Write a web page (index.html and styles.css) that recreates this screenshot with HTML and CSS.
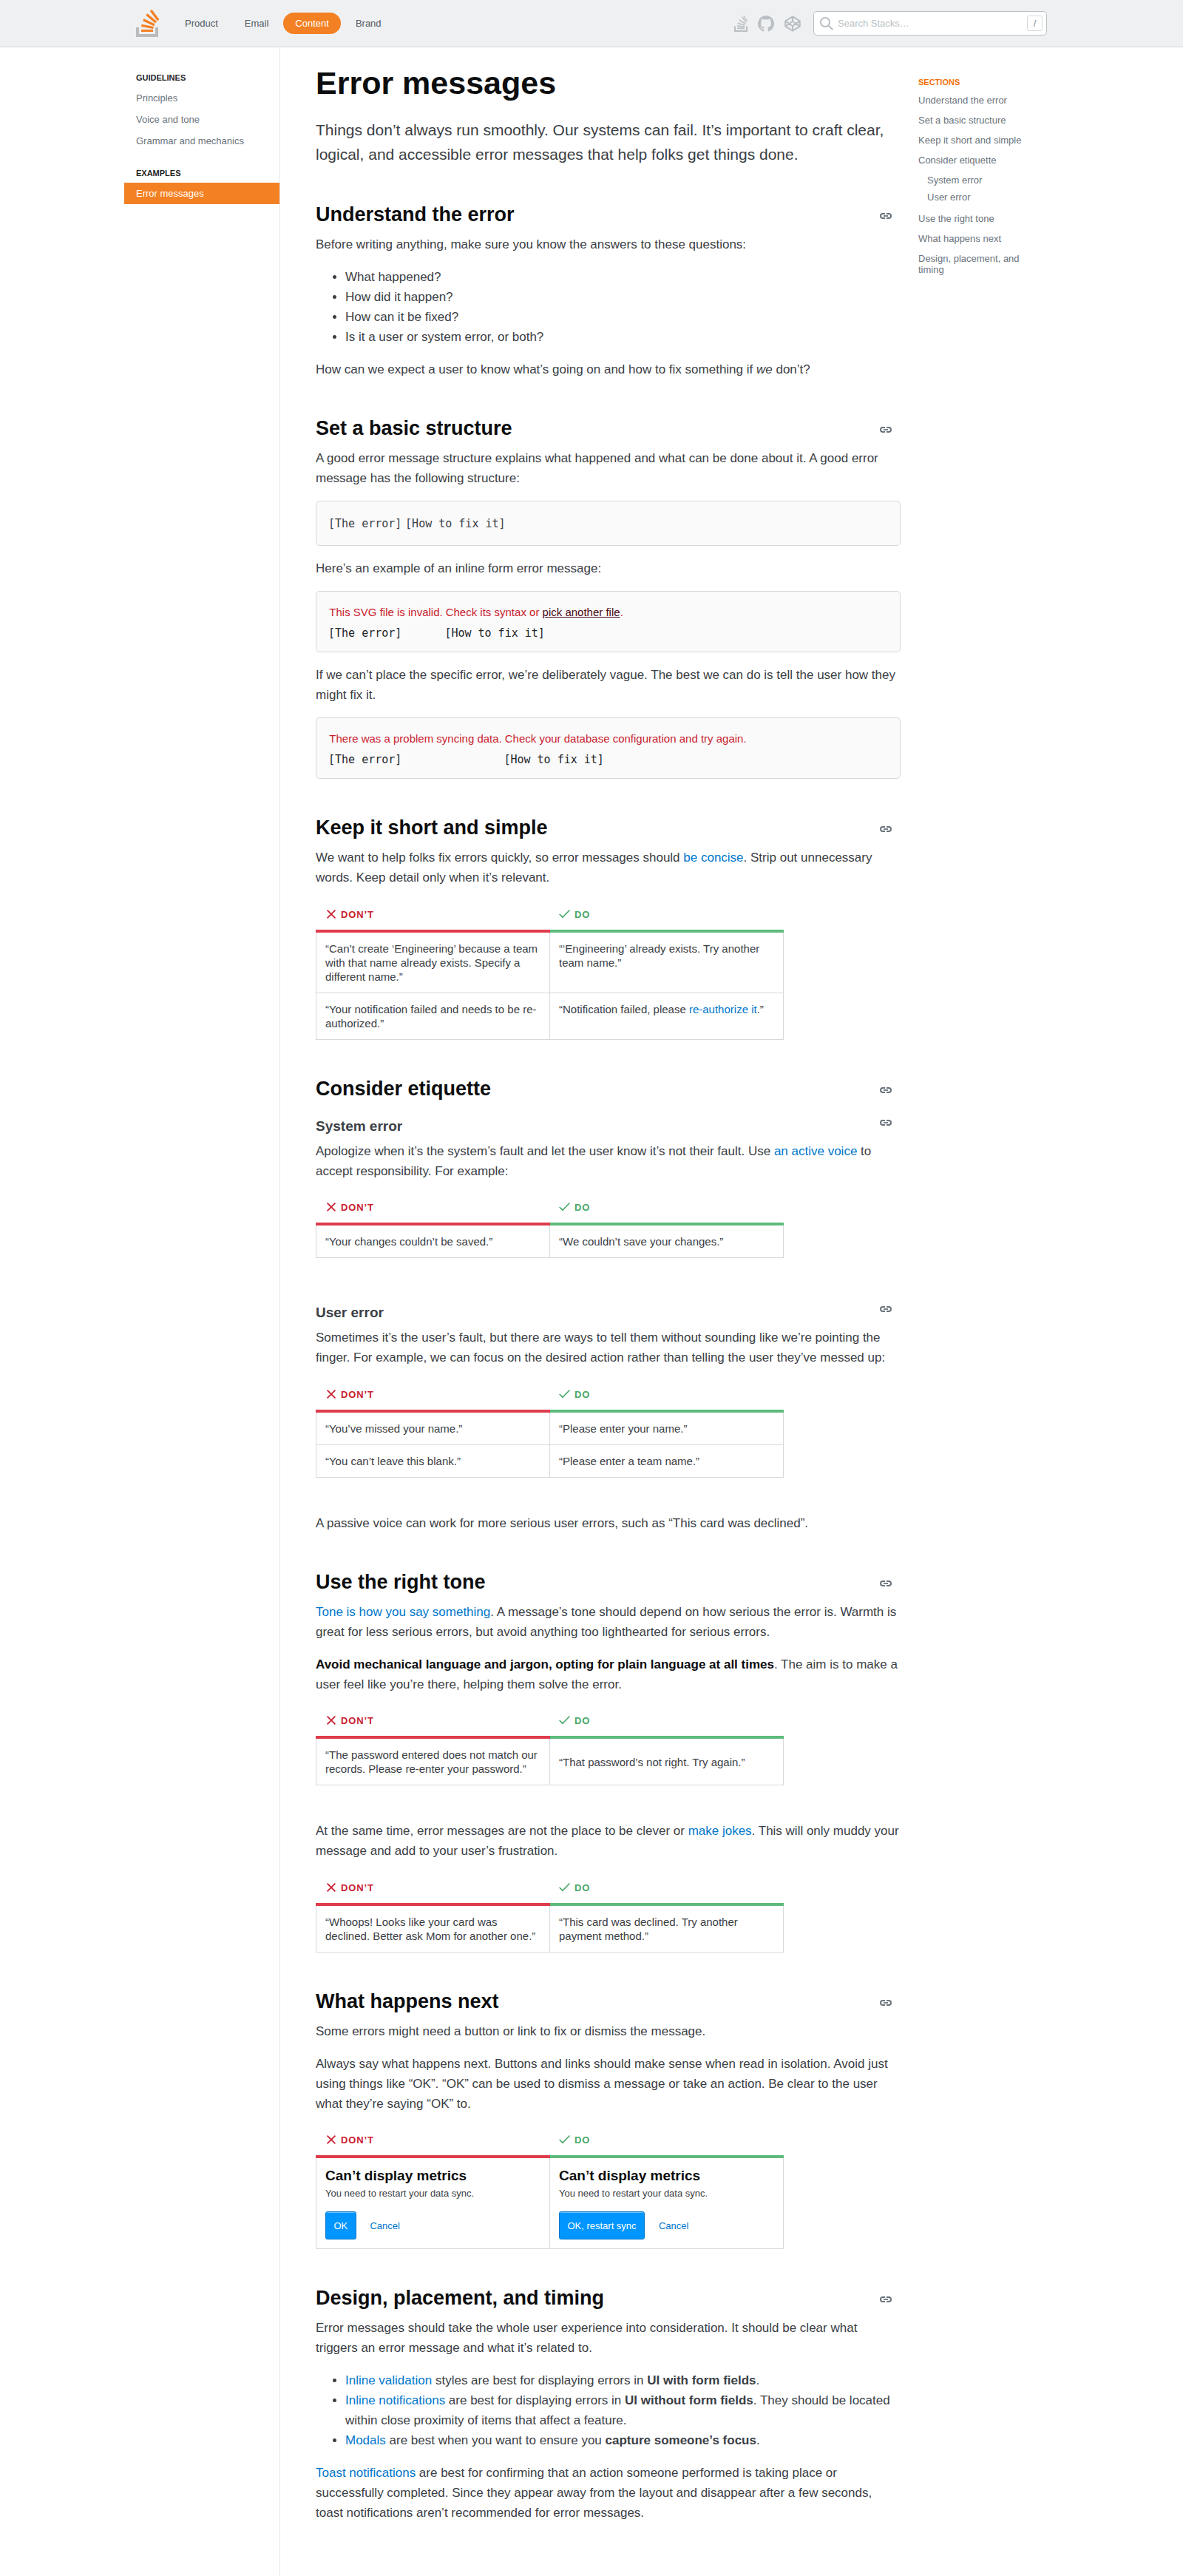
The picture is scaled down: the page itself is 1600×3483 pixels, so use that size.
FILE: index.html
```html
<!DOCTYPE html>
<html lang="en">
<head>
<meta charset="utf-8">
<title>Error messages - Stacks</title>
<link rel="stylesheet" href="styles.css">
</head>
<body>
<svg class="sprite" aria-hidden="true">
  <symbol id="link" viewBox="0 0 16 8"><path d="M7 1H4a3 3 0 0 0 0 6h3M9 1h3a3 3 0 0 1 0 6H9" fill="none" stroke="currentColor" stroke-width="2"/><path d="M5 3.100h6v1.800H5z" fill="currentColor"/></symbol>
  <symbol id="clear" viewBox="0 0 18 18"><path d="M15 4.200 13.800 3 9 7.800 4.200 3 3 4.200 7.800 9 3 13.800 4.200 15 9 10.200 13.800 15 15 13.800 10.200 9 15 4.200z"/></symbol>
  <symbol id="check" viewBox="0 0 18 18"><path d="M16 4.100 14.900 3 6 12.100 2.200 8.400 1.100 9.500 6 14.400z"/></symbol>
</svg>

<header class="topbar">
  <div class="topbar-inner">
    <a class="logo"><svg width="32" height="37" viewBox="0 0 32 37"><path d="M26 33v-9h4v13H0V24h4v9h22Z" fill="#bcbbbb"/><path d="m21.500 0-2.700 2 9.900 13.300 2.700-2L21.500 0ZM26 18.400 13.300 7.800l2.100-2.500 12.700 10.600-2.100 2.500ZM9.100 15.200l15 7 1.400-3-15-7-1.400 3Zm14 10.790.680-2.950-16.100-3.350L7 23l16.100 2.990ZM23 30H7v-3h16v3Z" fill="#f48024"/></svg></a>
    <nav class="topnav">
      <a>Product</a><a>Email</a><a class="active">Content</a><a>Brand</a>
    </nav>
    <div class="social">
      <svg width="18" height="22" viewBox="0 0 18 22"><path d="M0 14.500h2V20h14v-5.500h2V22H0z"/><path d="M4 16.200h10v2H4zM4.300 13.100l9.900 1.300-.2 1.500-9.900-1.200zM5 9.400l9.500 3.100-.5 1.500L4.500 11zM7.400 5.300l8.200 5.400-.8 1.300-8.300-5.300zM11.400 1.400l5.500 7.700-1.200.9-5.600-7.700zM13.300 0l4.900 7.200-1 .7L12.300.8z"/></svg>
      <svg width="22" height="22" viewBox="1 1 16 16"><path d="M9 1a8 8 0 0 0-2.530 15.590c.4.070.550-.170.550-.380l-.010-1.490c-2.010.370-2.530-.490-2.690-.940-.090-.230-.480-.940-.820-1.130-.280-.150-.680-.520-.010-.530.630-.010 1.080.580 1.230.820.720 1.210 1.870.870 2.330.660.070-.520.280-.870.510-1.070-1.780-.2-3.640-.890-3.640-3.950 0-.870.310-1.590.820-2.150-.080-.2-.360-1.020.080-2.120 0 0 .670-.210 2.200.820.640-.180 1.320-.270 2-.270s1.360.090 2 .270c1.530-1.040 2.200-.820 2.200-.820.440 1.100.160 1.920.080 2.120.510.560.820 1.270.820 2.150 0 3.070-1.870 3.750-3.650 3.950.290.250.540.730.540 1.480l-.010 2.200c0 .210.150.460.550.380A8 8 0 0 0 9 1"/></svg>
      <svg class="line" width="22" height="22" viewBox="0 0 22 22"><path d="M11 1.300 20.800 7.300v7.400L11 20.700 1.200 14.700V7.300zM1.200 7.300 11 14.200l9.800-6.900M1.200 14.700 11 7.800l9.800 6.900M11 1.300v6.500M11 14.200v6.500"/></svg>
    </div>
    <div class="search">
      <svg width="18" height="18" viewBox="0 0 18 18"><path d="m18 16.500-5.140-5.180h-.350a7 7 0 1 0-1.190 1.190v.350L16.500 18l1.500-1.500ZM12 7A5 5 0 1 1 2 7a5 5 0 0 1 10 0Z"/></svg>
      <span class="placeholder">Search Stacks…</span>
      <kbd>/</kbd>
    </div>
  </div>
</header>

<div class="layout">
  <aside class="sidebar">
    <h5>Guidelines</h5>
    <a>Principles</a><a>Voice and tone</a><a>Grammar and mechanics</a>
    <h5>Examples</h5>
    <a class="active">Error messages</a>
  </aside>

  <main class="content">
    <h1>Error messages</h1>
    <p class="lead">Things don’t always run smoothly. Our systems can fail. It’s important to craft clear, logical, and accessible error messages that help folks get things done.</p>

    <div class="heading first"><h2>Understand the error</h2><svg><use href="#link"/></svg></div>
    <p>Before writing anything, make sure you know the answers to these questions:</p>
    <ul>
      <li>What happened?</li>
      <li>How did it happen?</li>
      <li>How can it be fixed?</li>
      <li>Is it a user or system error, or both?</li>
    </ul>
    <p>How can we expect a user to know what’s going on and how to fix something if <em>we</em> don’t?</p>

    <div class="heading"><h2>Set a basic structure</h2><svg><use href="#link"/></svg></div>
    <p>A good error message structure explains what happened and what can be done about it. A good error message has the following structure:</p>
    <div class="example plain"><code>[The error]</code> <code>[How to fix it]</code></div>
    <p>Here’s an example of an inline form error message:</p>
    <div class="example parts">
      <div><span>This SVG file is invalid.</span><code>[The error]</code></div>
      <div><span>Check its syntax or <a>pick another file</a>.</span><code>[How to fix it]</code></div>
    </div>
    <p>If we can’t place the specific error, we’re deliberately vague. The best we can do is tell the user how they might fix it.</p>
    <div class="example parts">
      <div><span>There was a problem syncing data.</span><code>[The error]</code></div>
      <div><span>Check your database configuration and try again.</span><code>[How to fix it]</code></div>
    </div>

    <div class="heading"><h2>Keep it short and simple</h2><svg><use href="#link"/></svg></div>
    <p>We want to help folks fix errors quickly, so error messages should <a>be concise</a>. Strip out unnecessary words. Keep detail only when it’s relevant.</p>
    <table class="compare top">
      <tr><th><svg><use href="#clear"/></svg> Don’t</th><th><svg><use href="#check"/></svg> Do</th></tr>
      <tr><td>“Can’t create ‘Engineering’ because a team with that name already exists. Specify a different name.”</td><td>“‘Engineering’ already exists. Try another team name.”</td></tr>
      <tr><td>“Your notification failed and needs to be re-authorized.”</td><td>“Notification failed, please <a>re-authorize it</a>.”</td></tr>
    </table>

    <div class="heading"><h2>Consider etiquette</h2><svg><use href="#link"/></svg></div>
    <div class="heading sub"><h3>System error</h3><svg><use href="#link"/></svg></div>
    <p>Apologize when it’s the system’s fault and let the user know it’s not their fault. Use <a>an active voice</a> to accept responsibility. For example:</p>
    <table class="compare">
      <tr><th><svg><use href="#clear"/></svg> Don’t</th><th><svg><use href="#check"/></svg> Do</th></tr>
      <tr><td>“Your changes couldn’t be saved.”</td><td>“We couldn’t save your changes.”</td></tr>
    </table>
    <div class="heading sub"><h3>User error</h3><svg><use href="#link"/></svg></div>
    <p>Sometimes it’s the user’s fault, but there are ways to tell them without sounding like we’re pointing the finger. For example, we can focus on the desired action rather than telling the user they’ve messed up:</p>
    <table class="compare">
      <tr><th><svg><use href="#clear"/></svg> Don’t</th><th><svg><use href="#check"/></svg> Do</th></tr>
      <tr><td>“You’ve missed your name.”</td><td>“Please enter your name.”</td></tr>
      <tr><td>“You can’t leave this blank.”</td><td>“Please enter a team name.”</td></tr>
    </table>
    <p>A passive voice can work for more serious user errors, such as “This card was declined”.</p>

    <div class="heading"><h2>Use the right tone</h2><svg><use href="#link"/></svg></div>
    <p><a>Tone is how you say something</a>. A message’s tone should depend on how serious the error is. Warmth is great for less serious errors, but avoid anything too lighthearted for serious errors.</p>
    <p><strong class="dark">Avoid mechanical language and jargon, opting for plain language at all times</strong>. The aim is to make a user feel like you’re there, helping them solve the error.</p>
    <table class="compare">
      <tr><th><svg><use href="#clear"/></svg> Don’t</th><th><svg><use href="#check"/></svg> Do</th></tr>
      <tr><td>“The password entered does not match our records. Please re-enter your password.”</td><td>“That password’s not right. Try again.”</td></tr>
    </table>
    <p>At the same time, error messages are not the place to be clever or <a>make jokes</a>. This will only muddy your message and add to your user’s frustration.</p>
    <table class="compare">
      <tr><th><svg><use href="#clear"/></svg> Don’t</th><th><svg><use href="#check"/></svg> Do</th></tr>
      <tr><td>“Whoops! Looks like your card was declined. Better ask Mom for another one.”</td><td>“This card was declined. Try another payment method.”</td></tr>
    </table>

    <div class="heading"><h2>What happens next</h2><svg><use href="#link"/></svg></div>
    <p>Some errors might need a button or link to fix or dismiss the message.</p>
    <p>Always say what happens next. Buttons and links should make sense when read in isolation. Avoid just using things like “OK”. “OK” can be used to dismiss a message or take an action. Be clear to the user what they’re saying “OK” to.</p>
    <table class="compare">
      <tr><th><svg><use href="#clear"/></svg> Don’t</th><th><svg><use href="#check"/></svg> Do</th></tr>
      <tr>
        <td><h4>Can’t display metrics</h4><div class="note">You need to restart your data sync.</div><div class="buttons"><button class="primary">OK</button><button>Cancel</button></div></td>
        <td><h4>Can’t display metrics</h4><div class="note">You need to restart your data sync.</div><div class="buttons"><button class="primary">OK, restart sync</button><button>Cancel</button></div></td>
      </tr>
    </table>

    <div class="heading"><h2>Design, placement, and timing</h2><svg><use href="#link"/></svg></div>
    <p>Error messages should take the whole user experience into consideration. It should be clear what triggers an error message and what it’s related to.</p>
    <ul>
      <li><a>Inline validation</a> styles are best for displaying errors in <strong>UI with form fields</strong>.</li>
      <li><a>Inline notifications</a> are best for displaying errors in <strong>UI without form fields</strong>. They should be located within close proximity of items that affect a feature.</li>
      <li><a>Modals</a> are best when you want to ensure you <strong>capture someone’s focus</strong>.</li>
    </ul>
    <p><a>Toast notifications</a> are best for confirming that an action someone performed is taking place or successfully completed. Since they appear away from the layout and disappear after a few seconds, toast notifications aren’t recommended for error messages.</p>
  </main>

  <nav class="toc">
    <h5>Sections</h5>
    <a>Understand the error</a>
    <a>Set a basic structure</a>
    <a>Keep it short and simple</a>
    <a>Consider etiquette</a>
    <div class="toc-sub"><a>System error</a><a>User error</a></div>
    <a>Use the right tone</a>
    <a>What happens next</a>
    <a>Design, placement, and timing</a>
  </nav>
</div>
</body>
</html>
```
FILE: styles.css
```css
* { box-sizing: border-box; }
body {
  margin: 0;
  background: #fff;
  color: #3b4045;
  font: 17px/27px "Liberation Sans", Arial, sans-serif;
}
h1, h2, h3, h4, h5, p, ul { margin: 0; }
.sprite { display: none; }

/* Top bar */
.topbar { height: 64px; background: #eff0f1; border-bottom: 1px solid #d6d9dc; }
.topbar-inner {
  width: 1264px;
  height: 63px;
  margin: 0 auto;
  padding: 0 16px;
  display: flex;
  align-items: center;
  font-size: 13px;
  line-height: 17px;
}
.logo { display: flex; width: 50px; }
.topnav { display: flex; gap: 4px; flex: 1; color: #525960; }
.topnav a { padding: 6px 16px; border-radius: 15px; }
.topnav .active { background: #f48024; color: #fff; }
.social { display: flex; align-items: center; gap: 14px; margin-right: 17px; fill: #babfc4; }
.social svg { display: block; }
.social .line { fill: none; stroke: #babfc4; stroke-width: 2; stroke-linejoin: round; }
.search {
  width: 316px;
  height: 33px;
  display: flex;
  align-items: center;
  padding: 0 5px 0 8px;
  background: #fff;
  border: 1px solid #babfc4;
  border-radius: 5px;
  color: #babfc4;
}
.search svg { fill: #babfc4; }
.placeholder { flex: 1; padding-left: 6px; }
kbd {
  width: 21px;
  height: 21px;
  border: 1px solid #d6d9dc;
  border-radius: 3px;
  color: #848d95;
  font: 13px/19px "Liberation Sans", Arial, sans-serif;
  text-align: center;
}

/* Page columns */
.layout { width: 1264px; min-height: 3419px; margin: 0 auto; display: flex; }
.sidebar {
  width: 211px;
  flex: none;
  padding-top: 36px;
  border-right: 1px solid #e3e6e8;
  color: #6a737c;
  font-size: 13px;
  line-height: 17px;
}
.sidebar h5 {
  padding-left: 16px;
  margin-bottom: 7px;
  color: #232629;
  font-size: 11px;
  line-height: 11px;
  text-transform: uppercase;
}
.sidebar h5:not(:first-child) { margin-top: 24px; }
.sidebar a { display: block; padding: 6px 16px; }
.sidebar .active { background: #f48024; color: #fff; }

.toc {
  width: 214px;
  padding: 42px 46px 0 24px;
  color: #6a737c;
  font-size: 13px;
  line-height: 15px;
}
.toc h5 { margin-bottom: 11px; color: #f2720c; font-size: 11px; line-height: 11px; text-transform: uppercase; }
.toc a { display: block; margin-bottom: 12px; }
.toc-sub { padding-left: 12px; margin-bottom: 14px; }
.toc-sub a { margin-bottom: 8px; }

/* Article */
.content { width: 839px; flex: none; padding: 20px 0 0 48px; }
.content p, .content ul { margin-bottom: 17px; }
.content a { color: #0077cc; }
.content ul { padding-left: 40px; }
h1 { margin-bottom: 19px; color: #0c0d0e; font-size: 43px; line-height: 56px; }
.content .lead { font-size: 21px; line-height: 33px; }
.heading { display: flex; justify-content: space-between; margin: 49px 12px 9px 0; color: #6a737c; }
.heading.first { margin-top: 48px; }
.heading svg { width: 16px; height: 8px; margin-top: 15px; }
h2 { color: #0c0d0e; font-size: 27px; line-height: 35px; }
.sub { margin-bottom: 8px; }
.sub h3 { padding-top: 12px; color: #3b4045; font-size: 19px; line-height: 25px; }
.heading.sub svg { margin-top: 16px; }
.heading + .sub { margin-top: 8px; }
.heading:has(+ .sub) { margin-bottom: 8px; }
strong.dark { color: #0c0d0e; }

/* Message examples */
.example {
  margin-bottom: 17px;
  padding: 16px;
  background: #fafafb;
  border: 1px solid #d6d9dc;
  border-radius: 5px;
}
code { font: 15px/22px "DejaVu Sans Mono", monospace; }
.plain { height: 61px; }
.parts { height: 83.200px; display: flex; gap: 2.700px; font-size: 15px; line-height: 24px; }
.parts span { display: block; padding-left: 1.300px; color: #c91d2e; }
.parts a { color: #4c0b14; text-decoration: underline; }
.parts code { display: block; margin-top: 5px; color: #232629; }

/* Don't / do tables */
.compare {
  width: 633px;
  margin: -.5px 0 48px;
  border-spacing: 0;
  table-layout: fixed;
  font-size: 15px;
  line-height: 19px;
}
.compare th {
  width: 317px;
  height: 44px;
  padding: 12px;
  border-bottom: 4px solid #de3c4b;
  color: #c91d2e;
  fill: #c91d2e;
  font-size: 13px;
  line-height: 16px;
  letter-spacing: .9px;
  text-align: left;
  text-transform: uppercase;
}
.compare th + th { width: 316px; padding-left: 11px; border-color: #5eba7d; color: #48a868; fill: #48a868; }
.compare th svg { width: 18px; height: 18px; margin: -2px -.5px -1px 0; vertical-align: -3px; }
.compare td { padding: 12px; border: solid #d6d9dc; border-width: 0 1px 1px; }
.compare td + td { border-left: 0; }
.top td { vertical-align: top; }
h4 { margin-bottom: 4px; color: #0c0d0e; font-size: 19px; line-height: 23px; }
.note { font-size: 13px; line-height: 17px; }
.buttons { display: flex; gap: 7.500px; margin-top: 16px; }
button {
  padding: 10.400px;
  border: 1px solid transparent;
  border-radius: 3px;
  background: none;
  color: #0077cc;
  font: 13px/15px "Liberation Sans", Arial, sans-serif;
}
.primary {
  background: #0095ff;
  border-color: #0077cc;
  color: #fff;
  box-shadow: inset 0 1px 0 rgba(255, 255, 255, .4);
}
```
